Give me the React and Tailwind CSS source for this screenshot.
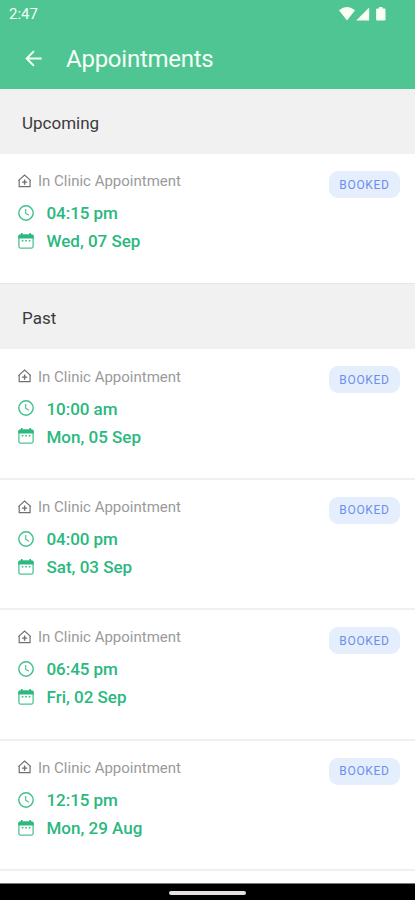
const upcoming = [{ time: '04:15 pm', date: 'Wed, 07 Sep' }];
const past = [
  { time: '10:00 am', date: 'Mon, 05 Sep' },
  { time: '04:00 pm', date: 'Sat, 03 Sep' },
  { time: '06:45 pm', date: 'Fri, 02 Sep' },
  { time: '12:15 pm', date: 'Mon, 29 Aug' },
];

function ClinicIcon() {
  return (
    <svg className="mb-[1px] block h-[14px] w-[14px] shrink-0" viewBox="0 0 14 14" fill="none" stroke="#707070" strokeWidth="1.2">
      <path d="M0.4 6.6 6.6 1l6.2 5.6" />
      <path d="M1.2 5.9v6.8h10.9V5.9" />
      <path d="M6.6 5.5v5.2M4 8.1h5.2" strokeWidth="1.4" />
    </svg>
  );
}

function ClockIcon() {
  return (
    <svg className="mb-[2px] block h-4 w-4 shrink-0" viewBox="0 0 16 16" fill="none" stroke="#3fc08b" strokeWidth="1.4">
      <circle cx="8" cy="8" r="7.2" />
      <path d="M7.7 3.9v4.4l3.1 1.9" strokeWidth="1.1" />
    </svg>
  );
}

function CalendarIcon() {
  return (
    <svg className="mb-[2px] block h-4 w-4 shrink-0" viewBox="0 0 16 16" fill="none">
      <rect x="0.9" y="2.2" width="14.2" height="12.9" rx="1.5" stroke="#4fc494" strokeWidth="1.3" />
      <path d="M0.3 3.2Q0.3 1.6 1.9 1.6H14.1Q15.7 1.6 15.7 3.2V5.4H0.3Z" fill="#2bb97d" />
      <path d="M3.8 0v3M12.2 0v3" stroke="#2bb97d" strokeWidth="1.6" />
      <path d="M3.7 7.8h1.7M7.2 7.8h1.7M10.7 7.8h1.7" stroke="#3fc08b" strokeWidth="1.4" />
    </svg>
  );
}

function SectionHeader({ title }) {
  return (
    <h2 className="flex h-[65px] items-center bg-[#f1f1f1] pl-[22px] pt-[4px] text-[17px] text-[#3b3b3b]">
      {title}
    </h2>
  );
}

function Appointment({ time, date }) {
  return (
    <article className="flex h-[130.4px] items-start justify-between border-b-2 border-[#f0f0f0] bg-white pl-[18px] pr-[15px]">
      <div className="pt-[17.4px]">
        <div className="flex h-5 items-center gap-[6px] text-[15px] text-[#9a9a9a]">
          <ClinicIcon />
          <span>In Clinic Appointment</span>
        </div>
        <div className="mt-[8.6px] flex h-7 items-center gap-[12.5px] text-[17px] font-medium tracking-[-0.05px] text-[#2ab87e]">
          <ClockIcon />
          <span>{time}</span>
        </div>
        <div className="flex h-7 items-center gap-[12.5px] text-[17px] font-medium text-[#2ab87e]">
          <CalendarIcon />
          <span>{date}</span>
        </div>
      </div>
      <span className="mt-[17px] flex h-[27px] w-[71px] items-center justify-center rounded-[9px] bg-[#e5eefd] text-[12px] tracking-[0.7px] text-[#6d8feb]">
        BOOKED
      </span>
    </article>
  );
}

export default function App() {
  return (
    <div className="flex h-[900px] w-[415px] flex-col overflow-hidden bg-white font-[Roboto,sans-serif]">
      <header className="h-[89px] shrink-0 bg-[#4ec593] text-[#f5fff6]">
        <div className="flex h-[28px] items-center justify-between pl-[9px] pr-[29px] text-[15px]">
          <span>2:47</span>
          <svg className="block h-[14px] w-[47px]" viewBox="0 0 47 14" fill="#f9fff3">
            <path d="M0 3.2Q8 -3.2 16 3.2L8 13.5Z" />
            <path d="M30.2 0.5V13.5H17.2Z" />
            <path d="M38.3 1.6h1.7V0h3.6v1.6h1.7q1.2 0 1.2 1v9.9q0 1-1.2 1h-7q-1.2 0-1.2-1V2.6q0-1 1.2-1Z" />
          </svg>
        </div>
        <div className="flex h-[61px] items-center pl-[25px]">
          <svg className="block h-[17px] w-[17px]" viewBox="0 0 17 17" fill="none" stroke="currentColor" strokeWidth="2">
            <path d="M8.9 1.1 1.7 8.5l7.2 7.4M1.8 8.5H16.6" />
          </svg>
          <h1 className="ml-[24px] text-[24px] tracking-[-0.25px]">Appointments</h1>
        </div>
      </header>
      <main className="min-h-0 grow overflow-hidden">
        <section className="border-b border-[#e6e6e6] [&>article]:h-[129.4px] [&>article]:border-b-0">
          <SectionHeader title="Upcoming" />
          {upcoming.map((item) => <Appointment key={item.date} {...item} />)}
        </section>
        <section>
          <SectionHeader title="Past" />
          {past.map((item) => <Appointment key={item.date} {...item} />)}
        </section>
      </main>
      <footer className="flex h-[17px] shrink-0 items-center justify-center border-t border-[#777777] bg-black">
        <div className="mt-[2px] h-[4px] w-[77px] rounded-full bg-[#e5e0e2]" />
      </footer>
    </div>
  );
}
